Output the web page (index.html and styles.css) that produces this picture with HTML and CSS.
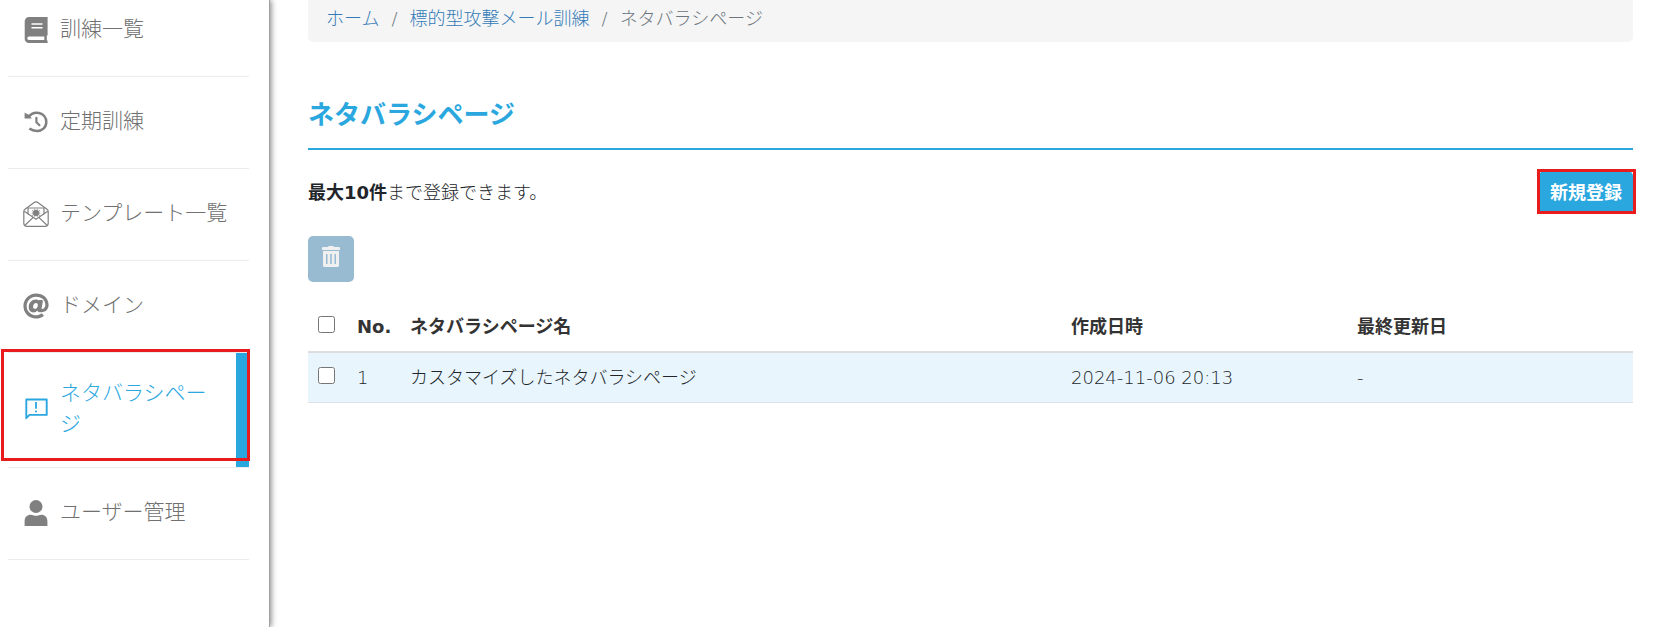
FILE: index.html
```html
<!DOCTYPE html>
<html lang="ja">
<head>
<meta charset="utf-8">
<meta name="viewport" content="width=device-width, initial-scale=1">
<title>ネタバラシページ</title>
<link rel="stylesheet" href="styles.css">
</head>
<body>
<div class="layout">
  <nav class="sidebar" aria-label="メニュー">
    <a class="nav-item" href="#">
      <svg class="icon" viewBox="0 0 26 26" aria-hidden="true"><path fill="currentColor" fill-rule="evenodd" d="M6 0H24.600V18.500H23.800V23.600H24.600V26H6A4.300 4.300 0 0 1 1.700 21.700V4.300A4.300 4.300 0 0 1 6 0ZM8.500 6.200V7.700H19.500V6.200ZM8.500 10V11.500H19.500V10ZM6 19.400A1.700 1.700 0 0 0 6 22.900H21.300V19.400Z"/></svg>
      <span>訓練一覧</span>
    </a>
    <a class="nav-item" href="#">
      <svg class="icon" viewBox="0 0 26 26" aria-hidden="true"><path fill="currentColor" d="M1.600 3.600 3.600 4.800 6 5.800 8.800 9.600H1.600Z"/><path fill="none" stroke="currentColor" stroke-width="2.500" d="M5.500 8.200C8 4.500 12 3.200 16 4C20.500 5 23.300 8.700 23.300 13C23.300 18.500 19 22 13.800 22C11 22 8.500 21.200 6.400 19.600"/><path fill="none" stroke="currentColor" stroke-width="2.200" stroke-linecap="round" stroke-linejoin="round" d="M13.400 8.800V13.200L16.400 16.200"/></svg>
      <span>定期訓練</span>
    </a>
    <a class="nav-item" href="#">
      <svg class="icon" viewBox="0 0 26 26" aria-hidden="true"><g fill="none" stroke="currentColor" stroke-width="1.200" stroke-linejoin="round"><path d="M.8 10.500C.8 9.500 1.200 8.900 2 8.300L10.800 1.700Q13 .1 15.200 1.700L24 8.300C24.800 8.900 25.200 9.500 25.200 10.500V22Q25.200 25.300 22 25.300H4Q.8 25.300 .8 22Z"/><path d="M5 13.200V7H21V13.200"/><path d="M1.300 10.300 13 18.200 24.700 10.300M2 24.300 10.200 16.400M24 24.300 15.800 16.400"/></g><circle cx="13" cy="12" r="2.900" fill="currentColor"/><path fill="none" stroke="currentColor" stroke-width="1" d="M9.200 9.500 16.800 14.500M16.800 9.500 9.200 14.500M8.800 12H17.200M11.800 8.200V15.600M14.200 8.200V15.600"/></svg>
      <span>テンプレート一覧</span>
    </a>
    <a class="nav-item" href="#">
      <svg class="icon" viewBox="0 0 512 512" aria-hidden="true"><path fill="currentColor" d="M256 8C118.940 8 8 118.919 8 256c0 137.058 110.919 248 248 248 52.925 0 104.680-17.078 147.092-48.319 5.501-4.052 6.423-11.924 2.095-17.211l-26.500-32c-4.115-5.100-11.440-5.750-16.700-2C331.500 428.200 294.200 440 256 440c-101.458 0-184-82.542-184-184S154.542 72 256 72c100.139 0 184 57.619 184 160 0 38.786-21.093 79.742-58.170 83.693-17.349-.454-16.910-12.857-13.476-30.024l23.433-121.110C394.653 149.750 383.308 136 368.225 136h-44.981a13.518 13.518 0 0 0-13.432 11.993c-14.697-17.901-40.448-21.775-59.971-21.775-74.580 0-137.831 62.234-137.831 151.460 0 65.303 36.785 105.870 96 105.870 26.984 0 57.369-15.637 74.991-38.333 9.522 34.104 40.613 34.104 70.710 34.104C462.609 379.410 504 307.798 504 232 504 95.653 394.023 8 256 8zm-21.680 304.430c-22.249 0-36.070-15.623-36.070-40.771 0-44.993 30.779-72.729 58.630-72.729 22.292 0 35.601 15.241 35.601 40.770 0 45.061-33.875 72.730-58.161 72.730z"/></svg>
      <span>ドメイン</span>
    </a>
    <a class="nav-item nav-item--active" href="#" aria-current="page">
      <svg class="icon" viewBox="0 0 26 26" aria-hidden="true"><path fill="none" stroke="currentColor" stroke-width="1.900" stroke-linejoin="round" d="M3.300 3.500H23.700V18.900H6.500L3.300 22.200Z"/><path fill="currentColor" d="M12.100 6H13.900V12.800H12.100ZM12.100 14.500H13.900V16.300H12.100Z"/></svg>
      <span>ネタバラシページ</span>
    </a>
    <a class="nav-item" href="#">
      <svg class="icon" viewBox="0 0 26 26" aria-hidden="true"><circle cx="13" cy="6.500" r="6.500" fill="currentColor"/><path fill="currentColor" d="M1.600 26V21C1.600 17 4.200 14.700 7.700 14.700C9.700 14.700 10.500 15.800 13 15.800S16.300 14.700 18.300 14.700C21.800 14.700 24.400 17 24.400 21V26Z"/></svg>
      <span>ユーザー管理</span>
    </a>
  </nav>
  <main class="content">
    <nav class="breadcrumb" aria-label="パンくず">
      <a href="#">ホーム</a><span>/</span><a href="#">標的型攻撃メール訓練</a><span>/</span><span>ネタバラシページ</span>
    </nav>
    <h1 class="title">ネタバラシページ</h1>
    <div class="toolbar">
      <p class="note"><strong>最大10件</strong>まで登録できます。</p>
      <button class="create" type="button">新規登録</button>
    </div>
    <button class="delete" type="button" aria-label="削除">
      <svg class="trash" viewBox="0 0 18 21" aria-hidden="true"><path fill="currentColor" fill-rule="evenodd" d="M6 1Q6 0 7 0H11Q12 0 12 1H17Q18 1 18 2V4H0V2Q0 1 1 1ZM1 5H17V19.500Q17 21 15.500 21H2.500Q1 21 1 19.500ZM4 8V18H5.500V8ZM8.200 8V18H9.800V8ZM12.500 8V18H14V8Z"/></svg>
    </button>
    <table class="list">
      <thead>
        <tr><th class="col-check"><input type="checkbox" aria-label="すべて選択"></th><th class="col-no">No.</th><th>ネタバラシページ名</th><th class="col-date">作成日時</th><th class="col-date">最終更新日</th></tr>
      </thead>
      <tbody>
        <tr><td><input type="checkbox" aria-label="1を選択"></td><td>1</td><td>カスタマイズしたネタバラシページ</td><td>2024-11-06 20:13</td><td>-</td></tr>
      </tbody>
    </table>
  </main>
</div>
</body>
</html>
```
FILE: styles.css
```css
* {
  box-sizing: border-box;
}

body {
  margin: 0;
  background: #fff;
  color: #212529;
  font-family: "DejaVu Sans", "Noto Sans CJK JP", sans-serif;
  font-size: 18px;
  font-weight: 300;
  line-height: 28px;
}

.layout {
  display: flex;
  min-height: 100vh;
}

.sidebar {
  flex: 0 0 270px;
  padding: 0 20px 0 8px;
  border-right: 1px solid #a0a0a0;
  box-shadow: 1px 0 6px rgba(0, 0, 0, 0.5);
}

.nav-item {
  position: relative;
  display: flex;
  align-items: center;
  gap: 11px;
  min-height: 92px;
  padding: 25px 40px 27px 15px;
  border-bottom: 1px solid #ececec;
  color: #707070;
  font-size: 21px;
  line-height: 31px;
  text-decoration: none;
}

.nav-item:not(.nav-item--active) {
  padding-right: 0;
}

.nav-item:first-child {
  min-height: 77px;
  padding-top: 0;
  padding-bottom: 17px;
}

.icon {
  flex: none;
  width: 26px;
  height: 26px;
  color: #808080;
}

.nav-item--active,
.nav-item--active .icon {
  color: #2ba7e0;
}

.nav-item--active::before {
  content: "";
  position: absolute;
  top: 0;
  right: 0;
  bottom: 0;
  width: 13px;
  background: #2ba7e0;
}

.nav-item--active::after {
  content: "";
  position: absolute;
  top: -4px;
  right: -1px;
  bottom: 6px;
  left: -7px;
  border: 3px solid #e81c1c;
}

.content {
  flex: 1;
  min-width: 0;
  padding: 0 23px 0 38px;
}

.breadcrumb {
  display: flex;
  gap: 12px;
  padding: 5px 18px 9px;
  border-radius: 0 0 5px 5px;
  background: #f5f5f5;
  color: #6c757d;
}

.breadcrumb a {
  color: #337ab7;
  text-decoration: none;
}

.title {
  margin: 54px 0 21px;
  padding-bottom: 14px;
  border-bottom: 2px solid #2ba7e0;
  color: #2ba7e0;
  font-size: 26px;
  font-weight: 700;
  line-height: 38px;
}

.toolbar {
  display: flex;
  justify-content: space-between;
  align-items: center;
  margin-bottom: 22px;
}

.note {
  margin: 0;
}

.note strong {
  font-weight: 700;
}

.create {
  position: relative;
  height: 43px;
  padding: 0 11px 4px;
  border: 0;
  border-radius: 5px;
  background: #2ba7e0;
  color: #fff;
  font: 700 18px/28px "Noto Sans CJK JP", sans-serif;
}

.create::after {
  content: "";
  position: absolute;
  top: -2px;
  right: -3px;
  bottom: 0;
  left: -2px;
  border: 3px solid #e81c1c;
}

.delete {
  display: flex;
  justify-content: center;
  align-items: flex-start;
  width: 46px;
  height: 46px;
  padding: 10px 0 0;
  border: 0;
  border-radius: 5px;
  background: #99bbd2;
  color: #f0f0f0;
}

.trash {
  width: 18px;
  height: 21px;
}

.list {
  width: 100%;
  margin-top: 20px;
  border-collapse: separate;
  border-spacing: 0;
  table-layout: fixed;
}

.list th,
.list td {
  padding: 11px 10px 10px;
  text-align: left;
}

.list th {
  border-bottom: 2px solid #ddd;
  color: #333;
  font-weight: 700;
}

.list td {
  border-bottom: 1px solid #dee2e6;
  background: #e8f5fd;
}

.list input {
  display: block;
  width: 17px;
  height: 17px;
  margin: 0 0 5px;
}

.col-check {
  width: 39px;
}

.col-no {
  width: 53px;
}

.col-date {
  width: 286px;
}
```
